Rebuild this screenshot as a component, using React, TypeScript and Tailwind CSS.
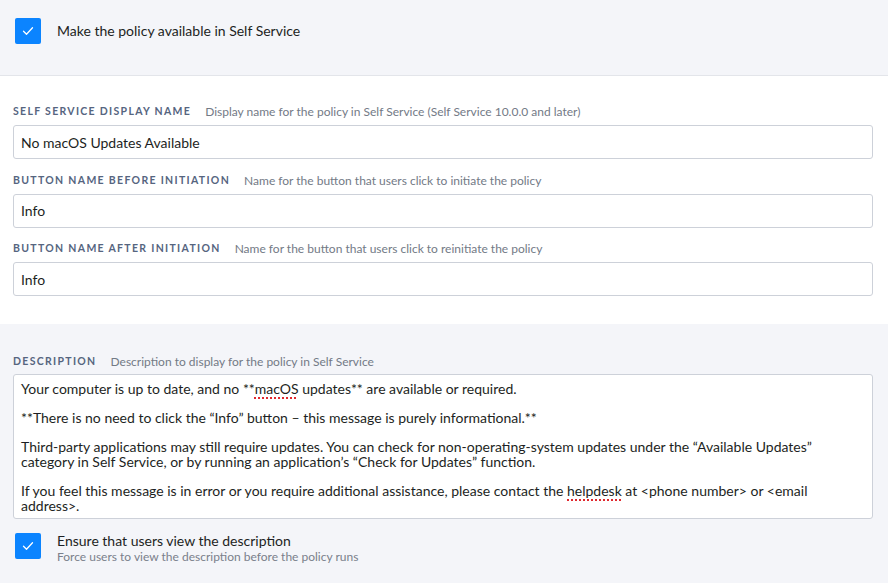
import React from "react";

function Check() {
  return (
    <div className="w-[26px] h-[26px] rounded-[2px] bg-[#0b84ff] flex items-center justify-center shrink-0">
      <svg width="12" height="10" viewBox="0 0 12 10" fill="none">
        <path d="M1.5 5.2L4.5 8.2L10.5 1.8" stroke="white" strokeWidth="1.3" strokeLinecap="round" strokeLinejoin="round" />
      </svg>
    </div>
  );
}

function Label({ label, help }: { label: string; help: string }) {
  return (
    <div className="flex items-center h-[14px]">
      <span className="text-[10.5px] font-bold tracking-[0.125em] text-[#56657f] uppercase whitespace-nowrap">{label}</span>
      <span className="ml-[14px] text-[12px] text-[#737a86] whitespace-nowrap">{help}</span>
    </div>
  );
}

function Field({ label, help, value }: { label: string; help: string; value: string }) {
  return (
    <div className="flex flex-col">
      <div className="mb-[6px]">
        <Label label={label} help={help} />
      </div>
      <div className="h-[34px] border border-[#cdd1d9] rounded-[3px] bg-white flex items-center px-[7px] text-[14px] text-[#1d1f23]">
        {value}
      </div>
    </div>
  );
}

const sp = "underline decoration-dotted decoration-[#e0282e] decoration-[1.5px] underline-offset-[3px]";

export default function App() {
  return (
    <div className="w-[888px] h-[583px] bg-[#f4f5f9] font-['Lato',sans-serif] overflow-hidden">
      <div className="h-[76px] border-b border-[#e3e5ea] flex items-start pt-[18px] px-[15px]">
        <Check />
        <span className="ml-[16px] mt-[2px] text-[14px] text-[#1d1f23]">Make the policy available in Self Service</span>
      </div>
      <div className="bg-white px-[13px] pt-[29px] pb-[28px]">
        <div className="w-[860px] flex flex-col gap-[14.5px]">
          <Field label="Self Service Display Name" help="Display name for the policy in Self Service (Self Service 10.0.0 and later)" value="No macOS Updates Available" />
          <Field label="Button Name Before Initiation" help="Name for the button that users click to initiate the policy" value="Info" />
          <Field label="Button Name After Initiation" help="Name for the button that users click to reinitiate the policy" value="Info" />
        </div>
      </div>
      <div className="px-[13px] pt-[31px]">
        <div className="w-[860px]">
          <div className="mb-[5px]">
            <Label label="Description" help="Description to display for the policy in Self Service" />
          </div>
          <div className="h-[145px] border border-[#cdd1d9] rounded-[3px] bg-white px-[7px] pt-[6px] text-[14px] leading-[15px] text-[#1d1f23]">
            <p>Your computer is up to date, and no **<span className={sp}>macOS</span> updates** are available or required.</p>
            <p className="mt-[14px]">**There is no need to click the “Info” button – this message is purely informational.**</p>
            <p className="mt-[14px]">Third-party applications may still require updates. You can check for non-operating-system updates under the “Available Updates” category in Self Service, or by running an application’s “Check for Updates” function.</p>
            <p className="mt-[14px]">If you feel this message is in error or you require additional assistance, please contact the <span className={sp}>helpdesk</span> at &lt;phone number&gt; or &lt;email address&gt;.</p>
          </div>
        </div>
        <div className="flex items-start mt-[14px] px-[2px]">
          <Check />
          <div className="ml-[16px] flex flex-col">
            <span className="text-[14px] leading-[16px] text-[#1d1f23]">Ensure that users view the description</span>
            <span className="text-[12px] leading-[15px] text-[#7a808b]">Force users to view the description before the policy runs</span>
          </div>
        </div>
      </div>
    </div>
  );
}
